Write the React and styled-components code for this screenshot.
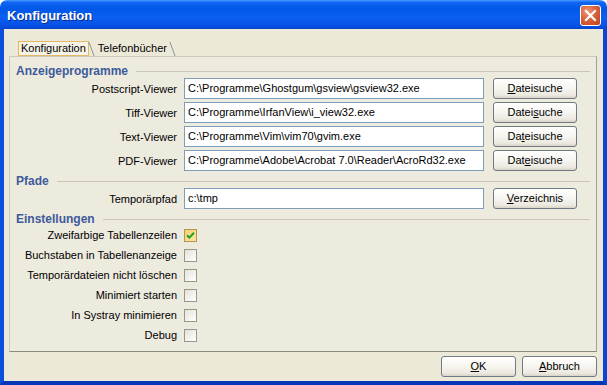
import React from 'react';
import styled, { createGlobalStyle } from 'styled-components';

const GlobalStyle = createGlobalStyle`
  html, body {
    margin: 0;
    padding: 0;
    background: #ffffff;
  }
  body {
    font-family: "Liberation Sans", Arial, sans-serif;
    font-size: 11px;
    color: #000;
  }
`;

const viewers = [
  { label: 'Postscript-Viewer', path: 'C:\\Programme\\Ghostgum\\gsview\\gsview32.exe', mn: 0 },
  { label: 'Tiff-Viewer', path: 'C:\\Programme\\IrfanView\\i_view32.exe', mn: 5 },
  { label: 'Text-Viewer', path: 'C:\\Programme\\Vim\\vim70\\gvim.exe', mn: 2 },
  { label: 'PDF-Viewer', path: 'C:\\Programme\\Adobe\\Acrobat 7.0\\Reader\\AcroRd32.exe', mn: 3 },
];

const options = [
  { label: 'Zweifarbige Tabellenzeilen', checked: true },
  { label: 'Buchstaben in Tabellenanzeige', checked: false },
  { label: 'Temporärdateien nicht löschen', checked: false },
  { label: 'Minimiert starten', checked: false },
  { label: 'In Systray minimieren', checked: false },
  { label: 'Debug', checked: false },
];

// label with an underlined access key
const Caption = ({ text, mn }) => (
  <>
    {text.slice(0, mn)}
    <Mnemonic>{text[mn]}</Mnemonic>
    {text.slice(mn + 1)}
  </>
);

const App = () => {
  return (
    <>
      <GlobalStyle />
      <Window>
        <TitleBar>
          <Title>Konfiguration</Title>
          <CloseButton>
            <svg width="13" height="13" viewBox="0 0 13 13">
              <path d="M2 2 L11 11 M11 2 L2 11" stroke="#fff" strokeWidth="2.2" strokeLinecap="square" />
            </svg>
          </CloseButton>
        </TitleBar>
        <Client>
          <TabStrip>
            <Tab>
              <TabLabel $active>Konfiguration</TabLabel>
            </Tab>
            <Tab>
              <TabLabel>Telefonbücher</TabLabel>
            </Tab>
          </TabStrip>
          <Panel>
            <SectionTitle>Anzeigeprogramme</SectionTitle>
            <Rows>
              {viewers.map(v => (
                <FieldRow key={v.label}>
                  <FieldLabel>{v.label}</FieldLabel>
                  <TextBox>{v.path}</TextBox>
                  <Button $wide>
                    <Caption text="Dateisuche" mn={v.mn} />
                  </Button>
                </FieldRow>
              ))}
            </Rows>
            <SectionTitle $gap>Pfade</SectionTitle>
            <Rows>
              <FieldRow>
                <FieldLabel>Temporärpfad</FieldLabel>
                <TextBox>c:\tmp</TextBox>
                <Button $wide>
                  <Caption text="Verzeichnis" mn={0} />
                </Button>
              </FieldRow>
            </Rows>
            <SectionTitle $gap>Einstellungen</SectionTitle>
            <CheckList>
              {options.map(o => (
                <CheckRow key={o.label}>
                  <FieldLabel>{o.label}</FieldLabel>
                  <CheckBox $checked={o.checked}>
                    {o.checked && (
                      <svg width="9" height="9" viewBox="0 0 9 9">
                        <path d="M1 4.2 L3.4 6.6 L8 1.8" fill="none" stroke="#21a121" strokeWidth="2" />
                      </svg>
                    )}
                  </CheckBox>
                </CheckRow>
              ))}
            </CheckList>
          </Panel>
          <Footer>
            <Button>
              <Caption text="OK" mn={0} />
            </Button>
            <Button>
              <Caption text="Abbruch" mn={0} />
            </Button>
          </Footer>
        </Client>
      </Window>
    </>
  );
};

export default App;

const Window = styled.div`
  width: 607px;
  height: 385px;
  display: flex;
  flex-direction: column;
  overflow: hidden;
  border-radius: 7px 7px 0 0;
`;

const TitleBar = styled.div`
  height: 29px;
  flex: none;
  display: flex;
  align-items: center;
  justify-content: space-between;
  padding: 0 6px 0 7px;
  background: linear-gradient(
    to bottom,
    #4b9bff 0%,
    #1166f2 8%,
    #0058e8 30%,
    #0a5ff0 60%,
    #0652e6 88%,
    #0343c9 100%
  );
`;

const Title = styled.span`
  font-family: "Liberation Sans", Arial, sans-serif;
  font-weight: bold;
  font-size: 13px;
  color: #fff;
  text-shadow: 1px 1px 0 #0a2a8f;
  margin-top: 2px;
`;

const CloseButton = styled.div`
  width: 21px;
  height: 21px;
  box-sizing: border-box;
  margin-top: 2px;
  border: 1px solid #fff;
  border-radius: 3px;
  display: flex;
  align-items: center;
  justify-content: center;
  background: radial-gradient(circle at 35% 30%, #ee9a78 0%, #d9623a 45%, #c0401c 100%);
`;

const Client = styled.div`
  flex: 1;
  display: flex;
  flex-direction: column;
  background: #ece9d8;
  border-left: 4px solid #0b4fdf;
  border-right: 4px solid #0946d6;
  border-bottom: 4px solid #0636b8;
  padding: 9px 6px 4px 5px;
`;

const TabStrip = styled.div`
  height: 18px;
  flex: none;
  display: flex;
  align-items: flex-end;
  padding-left: 9px;
`;

const Tab = styled.div`
  position: relative;
  height: 15px;
  padding-right: 6px;
  display: flex;

  &::after {
    content: '';
    position: absolute;
    right: 3px;
    top: 1px;
    width: 1px;
    height: 14px;
    background: #8f9393;
    transform: skewX(20deg);
  }
`;

const TabLabel = styled.div`
  box-sizing: border-box;
  height: 15px;
  line-height: 13px;
  padding: 0 2px;
  border: 1px solid ${p => (p.$active ? '#e3b766' : 'transparent')};
  background: ${p => (p.$active ? '#f6f3e7' : 'transparent')};
`;

const Panel = styled.div`
  flex: 1;
  display: flex;
  flex-direction: column;
  background: #edeade;
  border-top: 1px solid #cdcabd;
  border-left: 1px solid #cdcabd;
  border-right: 1px solid #a3a197;
  border-bottom: 1px solid #8c8a7f;
  padding: 7px 6px 0 6px;
`;

const SectionTitle = styled.div`
  height: 14px;
  display: flex;
  align-items: center;
  margin-top: ${p => (p.$gap ? '3px' : '0')};
  font-weight: bold;
  font-size: 12px;
  color: #3d5a9c;

  &::after {
    content: '';
    flex: 1;
    height: 1px;
    margin-left: 8px;
    margin-top: 1px;
    background: #c9c6b6;
  }
`;

const Rows = styled.div`
  display: flex;
  flex-direction: column;
  gap: 3px;
`;

const FieldRow = styled.div`
  display: flex;
  align-items: center;
  height: 21px;
`;

const FieldLabel = styled.span`
  width: 161px;
  margin-right: 7px;
  text-align: right;
  white-space: nowrap;
`;

const TextBox = styled.div`
  box-sizing: border-box;
  width: 300px;
  height: 21px;
  line-height: 19px;
  padding: 0 3px;
  background: #fff;
  border: 1px solid #7f9db9;
  white-space: nowrap;
  overflow: hidden;
`;

const Button = styled.div`
  box-sizing: border-box;
  width: ${p => (p.$wide ? '84px' : '75px')};
  height: 21px;
  margin-left: ${p => (p.$wide ? '9px' : '0')};
  line-height: 19px;
  text-align: center;
  border: 1px solid #6f7a86;
  border-radius: 3px;
  background: linear-gradient(to bottom, #ffffff 0%, #f7f6f1 45%, #ece9e0 85%, #d8d3c6 100%);
`;

const Mnemonic = styled.span`
  text-decoration: underline;
`;

const CheckList = styled.div`
  display: flex;
  flex-direction: column;
  margin-top: -1px;
`;

const CheckRow = styled.div`
  display: flex;
  align-items: center;
  height: 20px;
`;

const CheckBox = styled.div`
  box-sizing: border-box;
  width: 13px;
  height: 13px;
  display: flex;
  align-items: center;
  justify-content: center;
  border: 1px solid ${p => (p.$checked ? '#b8954a' : '#97978c')};
  background: ${p =>
    p.$checked
      ? 'linear-gradient(135deg, #f2cf72 0%, #fbe6a6 100%)'
      : 'linear-gradient(135deg, #e4e2da 0%, #ffffff 100%)'};
`;

const Footer = styled.div`
  flex: none;
  display: flex;
  justify-content: flex-end;
  gap: 6px;
  margin-top: 4px;
`;
